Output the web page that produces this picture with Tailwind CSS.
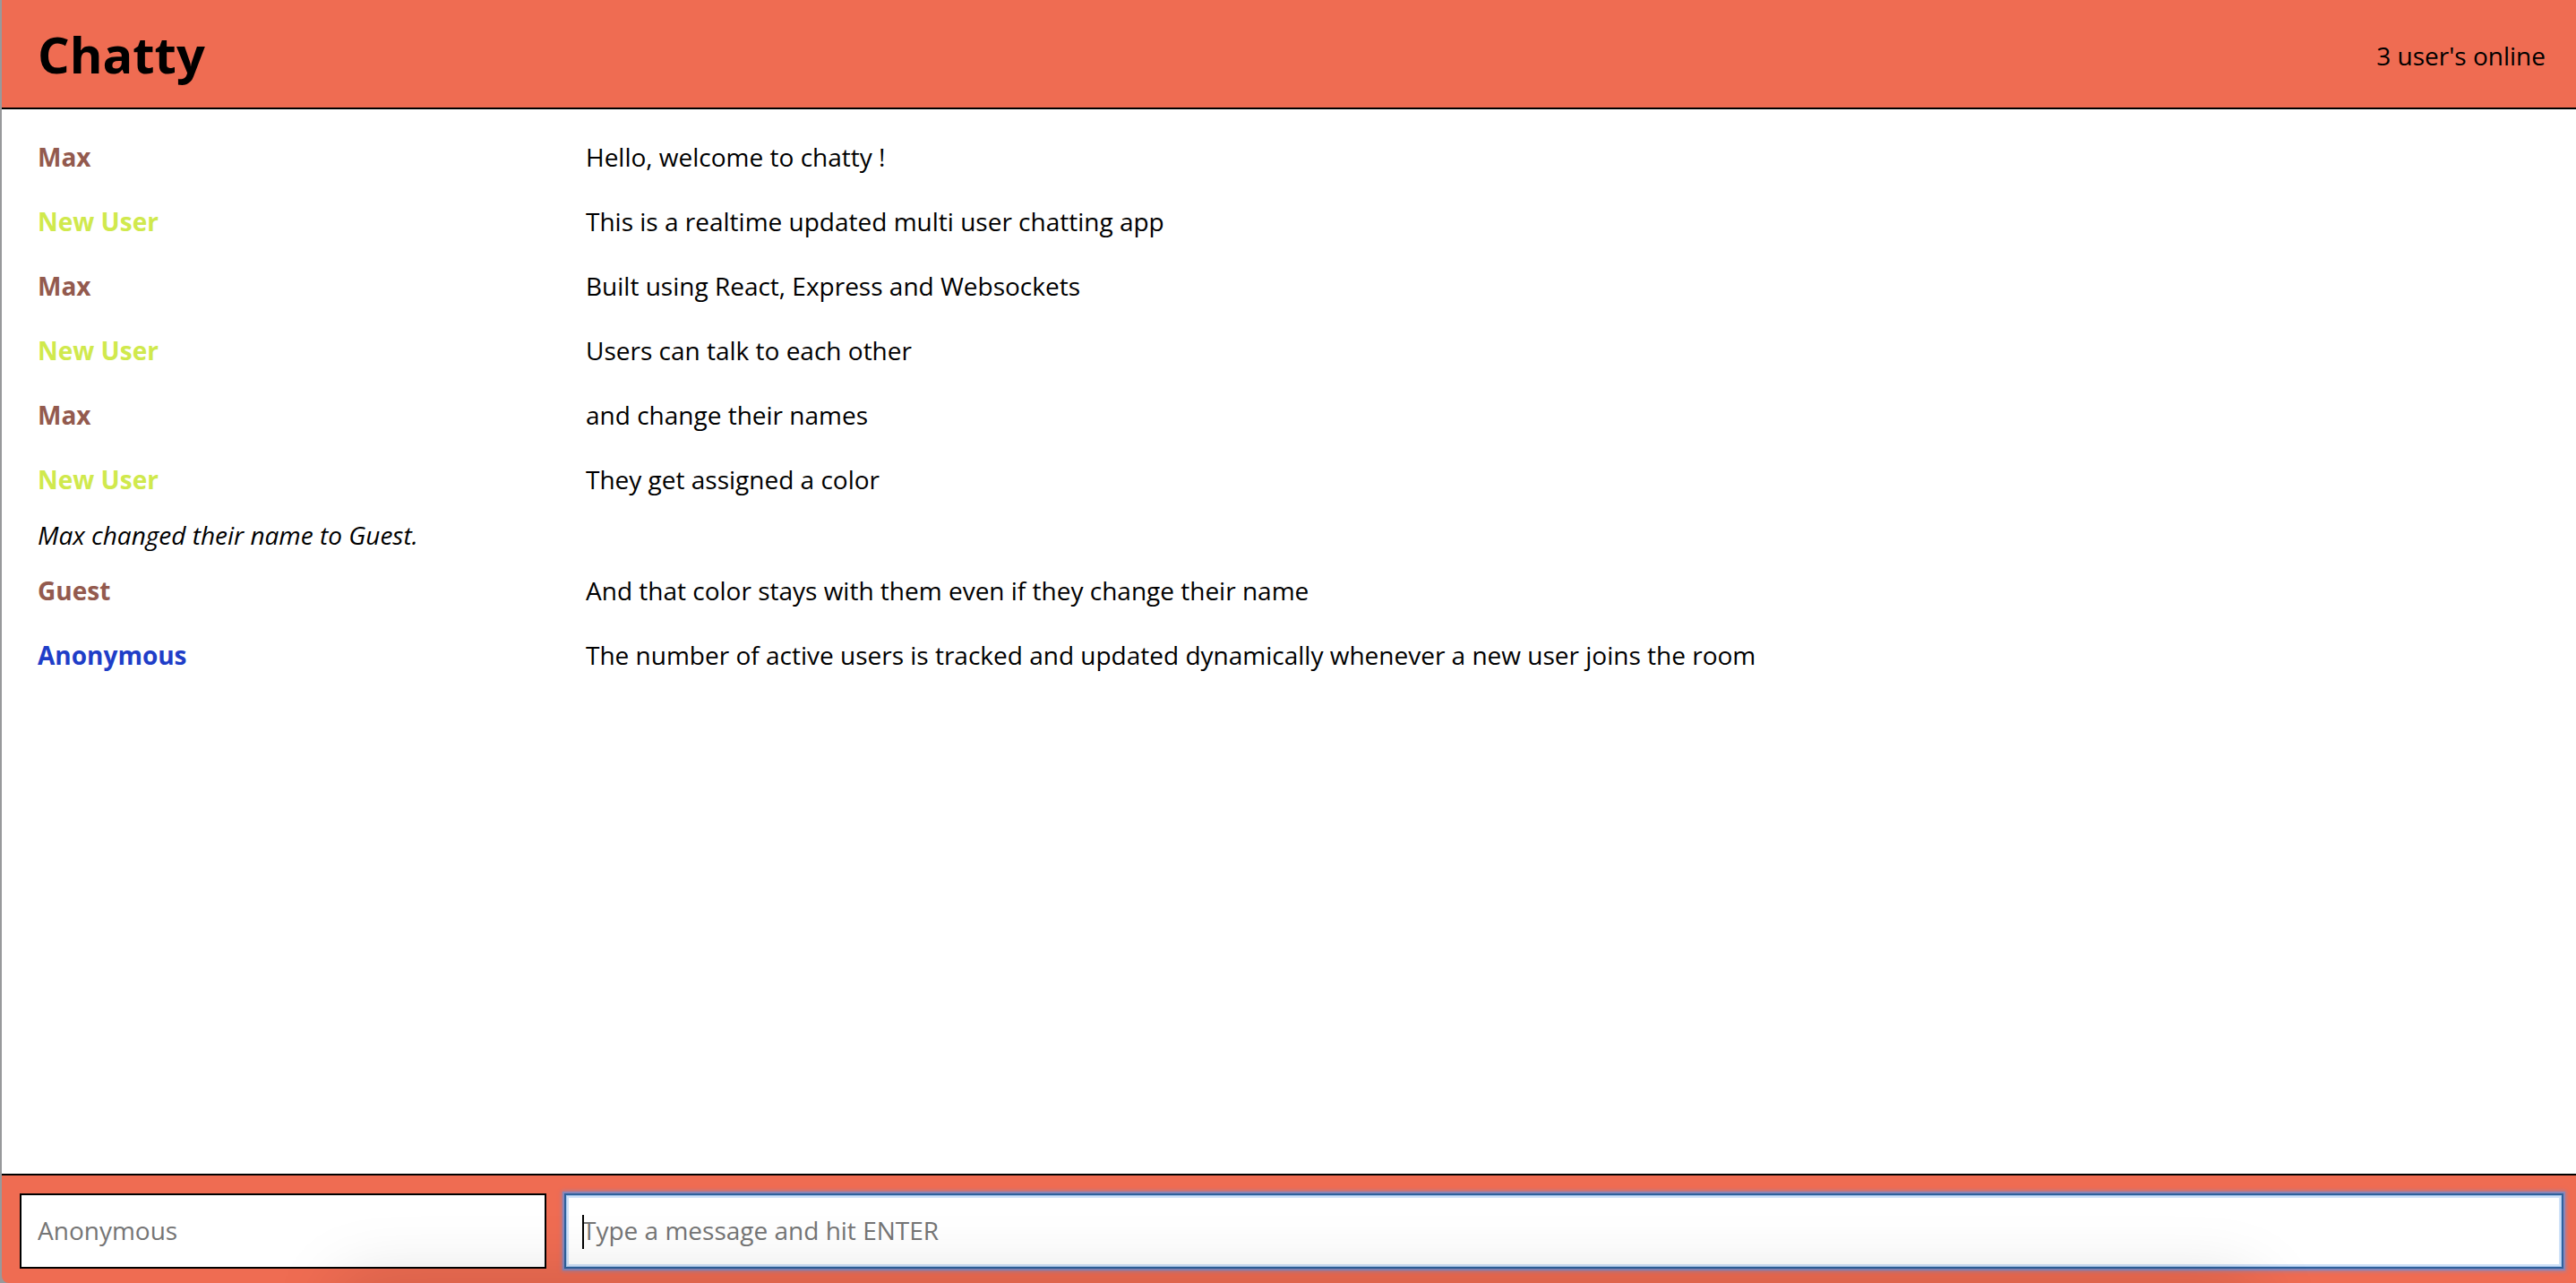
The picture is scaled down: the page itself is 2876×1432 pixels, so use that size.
<!DOCTYPE html>
<html lang="en">
<head>
<meta charset="utf-8">
<title>Chatty</title>
<script src="https://cdn.jsdelivr.net/npm/@tailwindcss/browser@4"></script>
</head>
<body class="flex h-screen flex-col overflow-hidden bg-[#98999b] pl-0.5 font-['Open_Sans',sans-serif] text-[28px] leading-10 text-black">
<header class="flex h-[122px] shrink-0 items-center justify-between border-b-2 border-black bg-[#ef6c52] pr-[34px] pl-10">
<h1 class="text-[56px] font-bold leading-[76px]"><a href="#">Chatty</a></h1>
<p class="pt-1">3 user's online</p>
</header>
<main class="flex-1 bg-white pt-[17px]">
<div class="flex px-10 py-4"><span class="w-[612px] shrink-0 font-bold text-[#935a4e]">Max</span><p>Hello, welcome to chatty !</p></div>
<div class="flex px-10 py-4"><span class="w-[612px] shrink-0 font-bold text-[#d0e94d]">New User</span><p>This is a realtime updated multi user chatting app</p></div>
<div class="flex px-10 py-4"><span class="w-[612px] shrink-0 font-bold text-[#935a4e]">Max</span><p>Built using React, Express and Websockets</p></div>
<div class="flex px-10 py-4"><span class="w-[612px] shrink-0 font-bold text-[#d0e94d]">New User</span><p>Users can talk to each other</p></div>
<div class="flex px-10 py-4"><span class="w-[612px] shrink-0 font-bold text-[#935a4e]">Max</span><p>and change their names</p></div>
<div class="flex px-10 py-4"><span class="w-[612px] shrink-0 font-bold text-[#d0e94d]">New User</span><p>They get assigned a color</p></div>
<p class="px-10 py-1.5 italic">Max changed their name to Guest.</p>
<div class="flex px-10 py-4"><span class="w-[612px] shrink-0 font-bold text-[#935a4e]">Guest</span><p>And that color stays with them even if they change their name</p></div>
<div class="flex px-10 py-4"><span class="w-[612px] shrink-0 font-bold text-[#1f3ec8]">Anonymous</span><p>The number of active users is tracked and updated dynamically whenever a new user joins the room</p></div>
</main>
<footer class="relative flex shrink-0 gap-5 overflow-hidden rounded-bl-lg border-t-2 border-black bg-[#ef6c52] pt-5 pr-3.5 pb-4 pl-5">
<input aria-label="Name" placeholder="Anonymous" class="h-[84px] w-[588px] border-2 border-black bg-white px-[18px] pb-0.5 placeholder:text-[#757575]">
<div class="relative flex flex-1">
<input aria-label="Message" placeholder="Type a message and hit ENTER" class="h-[84px] flex-1 border-2 border-[#2f619c] bg-white px-[18px] pb-0.5 shadow-[0_0_0_2px_#8a86b8,0_0_4px_3px_#a87e9c,inset_0_0_0_1px_#a9c8ee,inset_0_0_0_3px_#d0e2f8] placeholder:text-[#757575]">
<span class="absolute top-6 left-5 h-[38px] w-0.5 bg-black"></span>
</div>
<div class="pointer-events-none absolute top-full right-[360px] left-[380px] h-40 shadow-[0_0_80px_rgba(0,0,0,0.15)]"></div>
</footer>
</body>
</html>
